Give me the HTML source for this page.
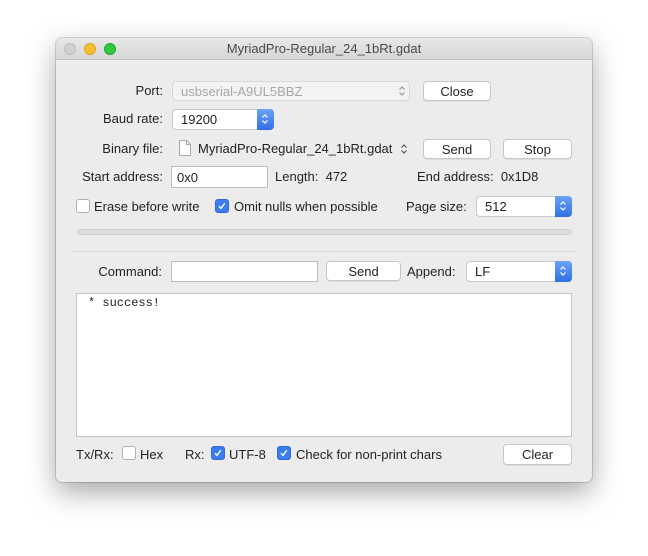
<!DOCTYPE html>
<html><head><style>
*{margin:0;padding:0;box-sizing:border-box}
body{width:648px;height:556px;background:#fff;font-family:"Liberation Sans",sans-serif;font-size:13px;color:#222;position:relative;overflow:hidden}
.win{position:absolute;left:56px;top:38px;width:536px;height:444px;background:#ececec;border-radius:6px;box-shadow:0 10px 28px rgba(0,0,0,.35),0 0 0 1px rgba(0,0,0,.15);overflow:hidden}
.tb{position:absolute;left:0;top:0;width:536px;height:22px;background:linear-gradient(#e8e8e8,#d6d6d6);border-bottom:1px solid #c4c4c4;text-align:center;line-height:22px;color:#4a4a4a;font-size:13px}
.dot{position:absolute;top:5px;width:12px;height:12px;border-radius:50%}
.a{position:absolute;white-space:nowrap;line-height:16px}
.r{text-align:right}
.btn{position:absolute;background:#fff;border:1px solid #c8c8c8;border-radius:4px;display:flex;align-items:center;justify-content:center;box-shadow:0 1px 0 rgba(0,0,0,.06)}
.pop{position:absolute;background:#fff;border:1px solid #c8c8c8;border-radius:4px;display:flex;align-items:center;padding-left:8px}
.step{position:absolute;right:-1px;top:-1px;bottom:-1px;width:17px;background:linear-gradient(#6aa3f8,#2f6fe6);border-radius:0 4px 4px 0}
.fld{position:absolute;background:#fff;border:1px solid #bcbcbc;display:flex;align-items:center;padding-left:5px}
.cb{position:absolute;width:14px;height:14px;border:1px solid #b0b0b0;border-radius:3px;background:#fff}
.cb.on{background:#3b7cf0;border-color:#2f6ad8}
</style></head><body>
<svg width="0" height="0" style="position:absolute"><defs>
<symbol id="chev" viewBox="0 0 8 14"><path d="M1.5 5.5L4 3l2.5 2.5M1.5 8.5L4 11l2.5-2.5" fill="none" stroke="currentColor" stroke-width="1.2"/></symbol>
<symbol id="tick" viewBox="0 0 14 14"><path d="M3.5 7.2l2.3 2.6 4.5-6" fill="none" stroke="#fff" stroke-width="1.6"/></symbol>
</defs></svg>
<div class="win">
<div class="tb">MyriadPro-Regular_24_1bRt.gdat</div>
<div class="dot" style="left:8px;background:#d0d0d0;border:1px solid #bdbdbd"></div>
<div class="dot" style="left:28px;background:#f6be2f;border:1px solid #dba526"></div>
<div class="dot" style="left:48px;background:#2fc640;border:1px solid #24a834"></div>
</div>
<div style="position:absolute;left:0;top:0">
<div class="a r" style="left:60px;width:103px;top:83px">Port:</div>
<div class="pop" style="left:172px;top:81px;width:238px;height:20px;color:#a8a8a8;background:#f3f3f3;border-color:#d8d8d8">usbserial-A9UL5BBZ<svg style="position:absolute;right:3px;top:2px;color:#999" width="8" height="14"><use href="#chev"/></svg></div>
<div class="btn" style="left:423px;top:81px;width:68px;height:20px">Close</div>

<div class="a r" style="left:60px;width:103px;top:111px">Baud rate:</div>
<div class="pop" style="left:172px;top:109px;width:102px;height:21px">19200<div class="step"><svg style="position:absolute;left:4px;top:3px;color:#fff" width="8" height="14"><use href="#chev"/></svg></div></div>

<div class="a r" style="left:60px;width:103px;top:141px">Binary file:</div>
<svg style="position:absolute;left:179px;top:140px" width="12" height="16"><path d="M.5 .5h7l4 4v11H.5z" fill="#fff" stroke="#aaa"/><path d="M7.5 .5v4h4" fill="none" stroke="#aaa"/></svg>
<div class="a" style="left:198px;top:141px">MyriadPro-Regular_24_1bRt.gdat</div>
<svg style="position:absolute;left:400px;top:142px;color:#555" width="8" height="14"><use href="#chev"/></svg>
<div class="btn" style="left:423px;top:139px;width:68px;height:20px">Send</div>
<div class="btn" style="left:503px;top:139px;width:69px;height:20px">Stop</div>

<div class="a r" style="left:60px;width:103px;top:169px">Start address:</div>
<div class="fld" style="left:171px;top:166px;width:97px;height:22px">0x0</div>
<div class="a" style="left:275px;top:169px">Length:&nbsp; 472</div>
<div class="a" style="left:417px;top:169px">End address:&nbsp; 0x1D8</div>

<div class="cb" style="left:76px;top:199px"></div>
<div class="a" style="left:94px;top:199px">Erase before write</div>
<div class="cb on" style="left:215px;top:199px"><svg width="12" height="12" viewBox="0 0 14 14"><use href="#tick"/></svg></div>
<div class="a" style="left:234px;top:199px">Omit nulls when possible</div>
<div class="a" style="left:406px;top:199px">Page size:</div>
<div class="pop" style="left:476px;top:196px;width:96px;height:21px">512<div class="step"><svg style="position:absolute;left:4px;top:3px;color:#fff" width="8" height="14"><use href="#chev"/></svg></div></div>

<div style="position:absolute;left:77px;top:229px;width:495px;height:6px;background:#dedede;border:1px solid #cfcfcf;border-radius:3px"></div>
<div style="position:absolute;left:72px;top:251px;width:504px;height:1px;background:#d4d4d4"></div>

<div class="a r" style="left:60px;width:102px;top:264px">Command:</div>
<div class="fld" style="left:171px;top:261px;width:147px;height:21px"></div>
<div class="btn" style="left:326px;top:261px;width:75px;height:20px">Send</div>
<div class="a" style="left:407px;top:264px">Append:</div>
<div class="pop" style="left:466px;top:261px;width:106px;height:21px">LF<div class="step"><svg style="position:absolute;left:4px;top:3px;color:#fff" width="8" height="14"><use href="#chev"/></svg></div></div>

<div style="position:absolute;left:76px;top:293px;width:496px;height:144px;background:#fff;border:1px solid #c4c4c4"></div>
<div class="a" style="left:88px;top:295px;font-family:'Liberation Mono',monospace;font-size:12px">* success!</div>

<div class="a" style="left:76px;top:447px">Tx/Rx:</div>
<div class="cb" style="left:122px;top:446px"></div>
<div class="a" style="left:140px;top:447px">Hex</div>
<div class="a" style="left:185px;top:447px">Rx:</div>
<div class="cb on" style="left:211px;top:446px"><svg width="12" height="12" viewBox="0 0 14 14"><use href="#tick"/></svg></div>
<div class="a" style="left:229px;top:447px">UTF-8</div>
<div class="cb on" style="left:277px;top:446px"><svg width="12" height="12" viewBox="0 0 14 14"><use href="#tick"/></svg></div>
<div class="a" style="left:296px;top:447px">Check for non-print chars</div>
<div class="btn" style="left:503px;top:444px;width:69px;height:21px">Clear</div>
</div>
</body></html>
